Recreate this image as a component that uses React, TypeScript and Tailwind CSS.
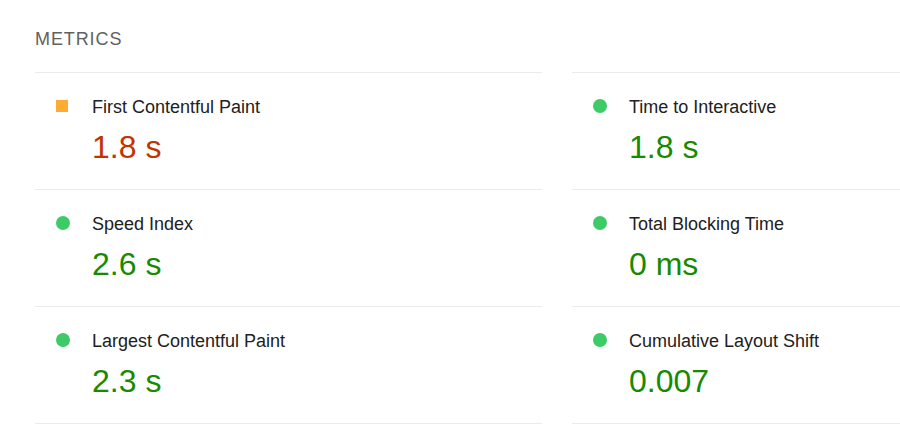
import React, { FC } from "react";

type Rating = "pass" | "average";

interface Metric {
  label: string;
  value: string;
  rating: Rating;
}

const metrics: Metric[] = [
  { label: "First Contentful Paint", value: "1.8 s", rating: "average" },
  { label: "Time to Interactive", value: "1.8 s", rating: "pass" },
  { label: "Speed Index", value: "2.6 s", rating: "pass" },
  { label: "Total Blocking Time", value: "0 ms", rating: "pass" },
  { label: "Largest Contentful Paint", value: "2.3 s", rating: "pass" },
  { label: "Cumulative Layout Shift", value: "0.007", rating: "pass" },
];

const MetricRow: FC<Metric> = ({ label, value, rating }) => {
  const isPass = rating === "pass";
  return (
    <div className="flex border-t border-[#ebebeb] pt-[22px] pb-[22px]">
      {/* 状态图标 */}
      <div className="w-[57px] shrink-0 pl-[21px]">
        {isPass ? (
          <div className="mt-[4px] w-[14px] h-[14px] rounded-full bg-[#3ecb67]" />
        ) : (
          <div className="mt-[5px] w-[12px] h-[12px] bg-[#ffaa33]" />
        )}
      </div>
      <div className="flex flex-col">
        <span className="text-[18px] leading-[24px] text-[#212121]">{label}</span>
        <span
          className={
            isPass
              ? "mt-[8px] text-[32px] leading-[40px] text-[#188a00]"
              : "mt-[8px] text-[32px] leading-[40px] text-[#c33300]"
          }
        >
          {value}
        </span>
      </div>
    </div>
  );
};

const App: FC = () => {
  return (
    <div
      className="w-[900px] h-[432px] overflow-hidden bg-white pl-[35px] pt-[27px]"
      style={{ fontFamily: '"Liberation Sans", Arial, sans-serif' }}
    >
      <div className="text-[18px] leading-[24px] tracking-[0.9px] text-[#616161] mb-[21px]">
        METRICS
      </div>
      <div className="grid grid-cols-[507px_507px] gap-x-[30px]">
        {metrics.map((m) => (
          <MetricRow key={m.label} {...m} />
        ))}
        <div className="border-t border-[#ebebeb]" />
        <div className="border-t border-[#ebebeb]" />
      </div>
    </div>
  );
};

export default App;
